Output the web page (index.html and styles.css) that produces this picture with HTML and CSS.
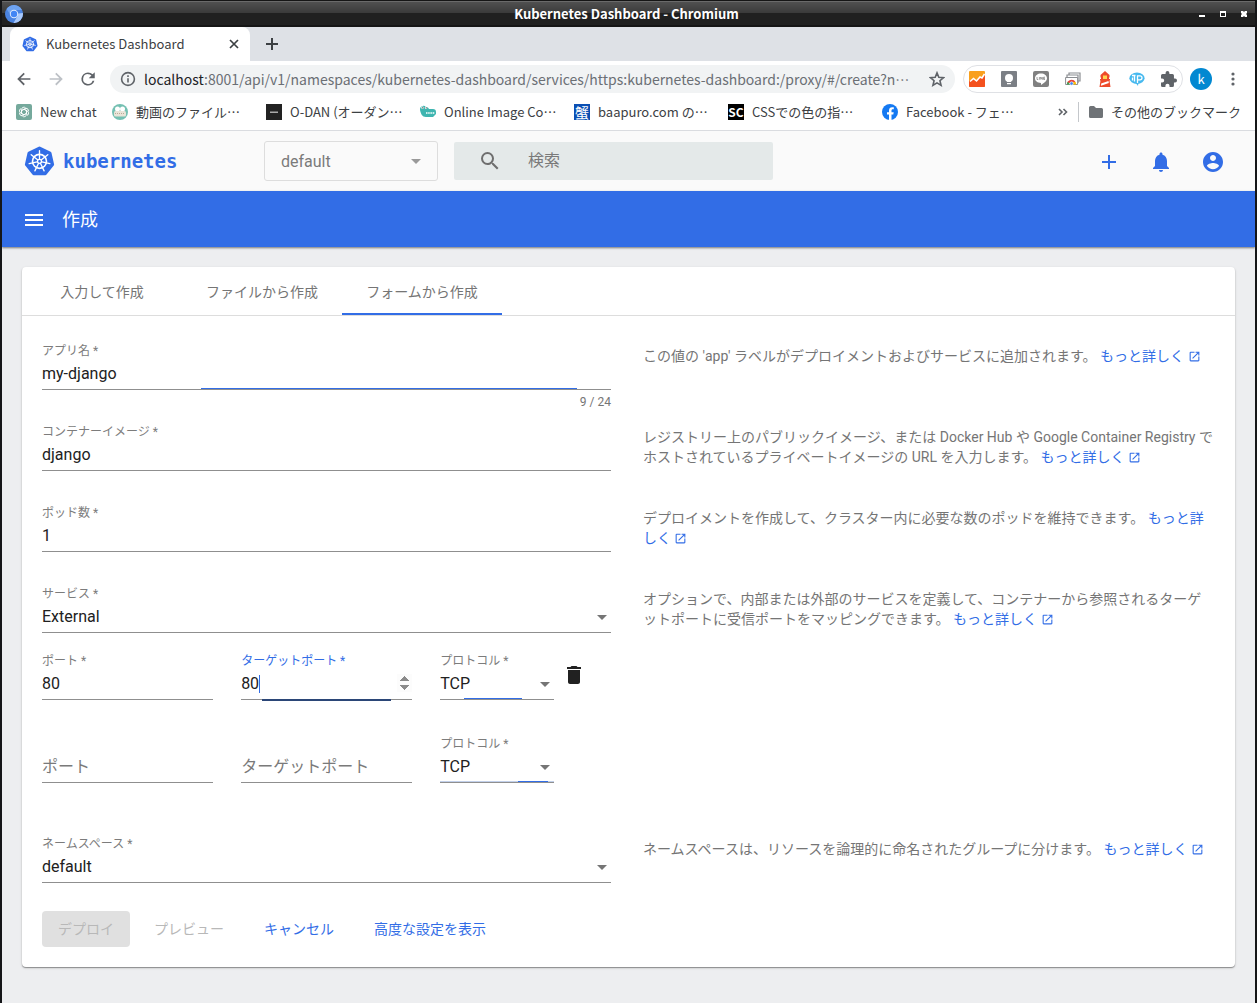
FILE: index.html
```html
<!DOCTYPE html>
<html lang="ja">
<head>
<meta charset="utf-8">
<meta name="viewport" content="width=device-width, initial-scale=1">
<title>Kubernetes Dashboard</title>
<link rel="stylesheet" href="styles.css">
</head>
<body>
<svg class="defs" aria-hidden="true">
  <symbol id="k8s" viewBox="2 2 28 27">
    <path d="M16 4 25.4 8.5 27.7 18.7 21.2 26.8H10.8L4.3 18.7 6.6 8.5Z" fill="#326de6" stroke="#326de6" stroke-width="3" stroke-linejoin="round"/>
    <g fill="none" stroke="#fff" stroke-width="1.2" stroke-linecap="round">
      <circle cx="16" cy="15.8" r="6.3" stroke-width="1.5"/>
      <path id="spoke" d="M16 13.6V6.2"/>
      <use href="#spoke" transform="rotate(51.43 16 15.8)"/>
      <use href="#spoke" transform="rotate(102.86 16 15.8)"/>
      <use href="#spoke" transform="rotate(154.29 16 15.8)"/>
      <use href="#spoke" transform="rotate(205.71 16 15.8)"/>
      <use href="#spoke" transform="rotate(257.14 16 15.8)"/>
      <use href="#spoke" transform="rotate(308.57 16 15.8)"/>
      <circle cx="16" cy="15.8" r="1.8"/>
    </g>
  </symbol>
  <symbol id="open" viewBox="0 0 24 24"><path d="M19 19H5V5h7V3H5a2 2 0 0 0-2 2v14a2 2 0 0 0 2 2h14c1.1 0 2-.9 2-2v-7h-2v7zM14 3v2h3.59l-9.83 9.83 1.41 1.41L19 6.41V10h2V3h-7z"/></symbol>
</svg>

<header class="titlebar">
  <svg class="icon18" viewBox="0 0 18 18"><circle cx="9" cy="9" r="9" fill="#4a83e0"/><path d="M9 9 17.9 8A9 9 0 0 1 8.500 18L12.500 11Z" fill="#a8c8fa"/><path d="M9 5h8A9 9 0 0 0 1.500 4L5 9Z" fill="#6ea3f0"/><circle cx="9" cy="9" r="4.200" fill="#dfeafd"/><circle cx="9" cy="9" r="3.200" fill="#4285f4"/></svg>
  <span class="titlebar-text">Kubernetes Dashboard - Chromium</span>
  <div class="window-buttons">
    <button aria-label="最小化"><svg viewBox="0 0 8 8"><path d="M1 5h6v2H1z"/></svg></button>
    <button aria-label="最大化"><svg viewBox="0 0 8 8"><path d="M1 1h6v6H1zM2 3v3h4V3z" fill-rule="evenodd"/></svg></button>
    <button aria-label="閉じる"><svg viewBox="0 0 8 8"><path d="M1 1h2l1 1 1-1h2v2L6 4l1 1v2H5L4 6 3 7H1V5l1-1-1-1z"/></svg></button>
  </div>
</header>

<div class="tabstrip">
  <div class="browser-tab">
    <svg class="icon16"><use href="#k8s"/></svg>
    <span class="browser-tab-title">Kubernetes Dashboard</span>
    <button aria-label="タブを閉じる"><svg viewBox="0 0 12 12" width="12" height="12"><path d="M2 2l8 8M10 2l-8 8" stroke="#3c4043" stroke-width="1.700"/></svg></button>
  </div>
  <button class="new-tab" aria-label="新しいタブ"><svg viewBox="0 0 14 14" width="14" height="14"><path d="M7 1v12M1 7h12" stroke="#3c4043" stroke-width="2"/></svg></button>
</div>

<div class="navbar">
  <button aria-label="戻る"><svg class="icon18" viewBox="0 0 24 24" fill="#5f6368"><path d="M20.500 10.900H7.400l5.700-5.700L11.500 3.500 3 12l8.500 8.500 1.600-1.700-5.700-5.700h13.100z"/></svg></button>
  <button aria-label="進む"><svg class="icon18" viewBox="0 0 24 24" fill="#bdc1c6"><path d="M3.500 10.900h13.100l-5.700-5.700 1.600-1.700L21 12l-8.500 8.500-1.600-1.700 5.700-5.700H3.500z"/></svg></button>
  <button aria-label="再読み込み"><svg class="icon18" viewBox="0 0 24 24" fill="#5f6368"><path d="M18.200 5.800A8.700 8.700 0 0 0 12 3.200a8.800 8.800 0 1 0 8.500 11h-2.400A6.500 6.500 0 1 1 12 5.500c1.800 0 3.400.7 4.600 1.900L13 11h8V3z"/></svg></button>
  <div class="omnibox">
    <svg class="icon16" viewBox="0 0 16 16" fill="none" stroke="#5f6368" stroke-width="1.600"><circle cx="8" cy="8" r="6.400"/><path d="M8 7.200v4.300M8 4.300v1.700"/></svg>
    <span class="url"><b>localhost</b>:8001/api/v1/namespaces/kubernetes-dashboard/services/https:kubernetes-dashboard:/proxy/#/create?n…</span>
    <svg class="icon16" viewBox="0 0 24 24" fill="none" stroke="#5f6368" stroke-width="2.400"><path d="M12 2.800l2.700 6.600 7.100.6-5.400 4.600 1.700 6.900-6.100-3.700-6.100 3.700 1.700-6.900-5.400-4.600 7.100-.6z"/></svg>
  </div>
  <div class="extensions">
    <svg class="icon16" viewBox="0 0 16 16"><rect width="16" height="16" rx="1" fill="#f9a01e"/><path d="M0 10 4 8l3 2 4-4 2 1 3-4v12a1 1 0 0 1-1 1H1a1 1 0 0 1-1-1z" fill="#f4511e"/><path d="M1 10.500 4.500 7.500l3 2.500L11 6l2 1 2.500-4" fill="none" stroke="#fff" stroke-width="1.600"/></svg>
    <svg class="icon16" viewBox="0 0 16 16"><rect width="16" height="16" rx="1" fill="#7b7f85"/><circle cx="8" cy="7" r="4" fill="#fff"/><path d="M6 9h4v2H6zM6 12h4v1.300H6z" fill="#fff"/></svg>
    <svg class="icon16" viewBox="0 0 16 16"><rect width="16" height="16" rx="2" fill="#808080"/><path d="M8 2.500c3.400 0 6 2.100 6 4.800 0 3-3.200 4.800-6 6.700v-2C4.600 12 2 10 2 7.300s2.600-4.800 6-4.800z" fill="#fff"/><path d="M4 6v2.500h1.200M6.400 6v2.700M7.700 8.600V6l1.600 2.500V6M12 6.200h-1.400v2.300H12M10.600 7.300H12" fill="none" stroke="#777" stroke-width=".7"/></svg>
    <svg class="icon16" viewBox="0 0 16 16"><path d="M4 3.500V2h11v8h-1.500M2 6V4h11v8" fill="none" stroke="#8a8d91" stroke-width="1.200"/><path d="M.6 6.500h12v7H.6z" fill="#fff" stroke="#8a8d91"/><path d="M2 13.500a4.600 4.600 0 0 1 8.500-2.500H6.600z" fill="#e94335"/><path d="M2 13.500a4.500 4.500 0 0 1 .8-2.700l2.500 2.700z" fill="#34a853"/><path d="M7 11h3.700l.5 2.500H7z" fill="#fbbc05"/><circle cx="6.600" cy="12.500" r="1.700" fill="#4285f4" stroke="#fff" stroke-width=".6"/></svg>
    <svg class="icon16" viewBox="0 0 16 16"><path d="M3.500 4 8 0l4.500 4v2.500H12v1.500h1v1.500h-.5L13.500 16h-11l1-6.500H3V8h1V6.500h-.5z" fill="#ee4b2b"/><path d="M6 4.500h4V8H6z" fill="#ffd54f"/><path d="M4.200 12.500 11.500 10l.3 2-7.800 2.800z" fill="#fff"/></svg>
    <svg class="icon16" viewBox="0 0 16 16"><ellipse cx="8" cy="7.200" rx="7.600" ry="5.700" fill="#46b9ef"/><path d="M6 11l3 4 .5-4z" fill="#46b9ef"/><path d="M3 4.500h3.500M5.500 4.500v6M3.500 6.500v3M8.500 12V4.800H11a2 2 0 0 1 0 4H8.500" stroke="#fff" stroke-width="1.300" fill="none"/></svg>
    <svg class="icon16" viewBox="2 1 21 21" fill="#5f6368"><path d="M20.500 11H19V7a2 2 0 0 0-2-2h-4V3.500a2.500 2.500 0 0 0-5 0V5H4a2 2 0 0 0-2 2v3.800h1.500a2.700 2.700 0 0 1 0 5.400H2V20a2 2 0 0 0 2 2h3.800v-1.500a2.700 2.700 0 0 1 5.400 0V22H17a2 2 0 0 0 2-2v-4h1.500a2.500 2.500 0 0 0 0-5z"/></svg>
  </div>
  <span class="avatar">k</span>
  <button class="more" aria-label="メニュー"><svg width="4" height="16" viewBox="0 0 4 16" fill="#5f6368"><circle cx="2" cy="3" r="1.600"/><circle cx="2" cy="8" r="1.600"/><circle cx="2" cy="13" r="1.600"/></svg></button>
</div>

<nav class="bookmarks">
  <a href="#" class="bookmark short"><svg class="icon16" viewBox="0 0 16 16"><rect width="16" height="16" rx="2" fill="#75a99c"/><g fill="none" stroke="#fff" stroke-width=".9"><path id="petal" d="M8 5.200 10.500 6.700V10.500a2.500 2.500 0 0 1-4 1.800"/><use href="#petal" transform="rotate(60 8 8)"/><use href="#petal" transform="rotate(120 8 8)"/><use href="#petal" transform="rotate(180 8 8)"/><use href="#petal" transform="rotate(240 8 8)"/><use href="#petal" transform="rotate(300 8 8)"/></g></svg>New chat</a>
  <a href="#" class="bookmark"><svg class="icon16" viewBox="0 0 16 16"><circle cx="8" cy="8" r="8" fill="#74c0b2"/><circle cx="5.500" cy="5" r="2.500" fill="#fff"/><circle cx="10.500" cy="5" r="2.500" fill="#fff"/><rect x="2" y="7" width="12" height="5.500" rx="1.500" fill="#e9e4d8"/><path d="M3 9.500h10" stroke="#b9ab97" stroke-dasharray="1 1"/></svg>動画のファイル…</a>
  <a href="#" class="bookmark"><svg class="icon16" viewBox="0 0 16 16"><rect width="16" height="16" fill="#222"/><path d="M4 7.500h8v1.500H4z" fill="#aaa"/></svg>O-DAN (オーダン…</a>
  <a href="#" class="bookmark"><svg class="icon16" viewBox="0 0 16 16"><path d="M0 6a3.500 3.500 0 0 1 6-3 3 3 0 0 1 3 2h4a3 3 0 0 1 3 3v2l-3 3H6C2 13 1 10 0 6z" fill="#3fb5b0"/><path d="M6 9h9" stroke="#fff" stroke-width="1.400" stroke-dasharray="1.500 .7"/><circle cx="2.500" cy="3.700" r="1.200" fill="#fff"/><circle cx="6" cy="3.700" r="1.200" fill="#fff"/><circle cx="2.700" cy="3.800" r=".6" fill="#222"/><circle cx="6.200" cy="3.800" r=".6" fill="#222"/></svg>Online Image Co…</a>
  <a href="#" class="bookmark"><span class="favicon blue">蟹</span>baapuro.com の…</a>
  <a href="#" class="bookmark"><span class="favicon black">SC</span>CSSでの色の指…</a>
  <a href="#" class="bookmark"><svg class="icon16" viewBox="0 0 16 16"><circle cx="8" cy="8" r="8" fill="#1479f2"/><path d="M7 16v-5.500H5V8.200h2V6.600C7 4.400 8.200 3.200 10.100 3.200l1.700.1v2h-1c-1 0-1.300.6-1.300 1.300v1.600h2.200l-.4 2.300H9.500V16z" fill="#fff"/></svg>Facebook - フェ…</a>
  <button class="overflow" aria-label="他のブックマーク"><svg width="10" height="8" viewBox="0 0 10 8" fill="none" stroke="#5f6368" stroke-width="1.600"><path d="M1 1l3 3-3 3M5.500 1l3 3-3 3"/></svg></button>
  <a href="#" class="bookmark folder"><svg width="14" height="16" viewBox="0 0 14 16" fill="#6f7377"><path d="M0 3.500A1.500 1.500 0 0 1 1.500 2H5l2 2h5.500A1.500 1.500 0 0 1 14 5.500v7a1.500 1.500 0 0 1-1.500 1.500h-11A1.500 1.500 0 0 1 0 12.500z"/></svg>その他のブックマーク</a>
</nav>

<header class="app-header">
  <a href="#" class="logo"><svg viewBox="2 2 28 27"><use href="#k8s" x="2" y="2" width="28" height="27"/></svg>kubernetes</a>
  <div class="namespace select-box">
    <select aria-label="ネームスペース選択"><option>default</option></select>
  </div>
  <label class="search">
    <svg class="icon24" viewBox="0 0 24 24" fill="#6e6e6e"><path d="M15.500 14h-.79l-.28-.27A6.471 6.471 0 0 0 16 9.500 6.500 6.500 0 1 0 9.500 16c1.610 0 3.090-.59 4.230-1.570l.27.28v.79l5 4.990L20.490 19l-4.990-5zm-6 0C7.010 14 5 11.990 5 9.500S7.010 5 9.500 5 14 7.010 14 9.500 11.990 14 9.500 14z"/></svg>
    <input type="text" placeholder="検索" aria-label="検索">
  </label>
  <div class="app-actions">
    <button aria-label="作成"><svg class="icon24" viewBox="0 0 24 24"><path d="M19 13h-6v6h-2v-6H5v-2h6V5h2v6h6v2z"/></svg></button>
    <button aria-label="通知"><svg class="icon24" viewBox="0 0 24 24"><path d="M12 22c1.100 0 2-.9 2-2h-4c0 1.100.89 2 2 2zm6-6v-5c0-3.070-1.640-5.640-4.500-6.320V4c0-.83-.67-1.500-1.500-1.500s-1.500.67-1.500 1.500v.68C7.630 5.360 6 7.920 6 11v5l-2 2v1h16v-1l-2-2z"/></svg></button>
    <button aria-label="ユーザー"><svg class="icon24" viewBox="0 0 24 24"><path d="M12 2C6.480 2 2 6.480 2 12s4.480 10 10 10 10-4.480 10-10S17.520 2 12 2zm0 3c1.660 0 3 1.340 3 3s-1.340 3-3 3-3-1.340-3-3 1.340-3 3-3zm0 14.200c-2.500 0-4.710-1.280-6-3.220.03-1.990 4-3.080 6-3.080 1.990 0 5.970 1.090 6 3.080-1.290 1.940-3.500 3.220-6 3.220z"/></svg></button>
  </div>
</header>

<div class="action-bar">
  <button aria-label="ナビゲーション"><svg class="icon24" viewBox="0 0 24 24" fill="#fff"><path d="M3 18h18v-2H3v2zm0-5h18v-2H3v2zm0-7v2h18V6H3z"/></svg></button>
  <h1>作成</h1>
</div>

<main>
  <section class="card">
    <div class="tabs" role="tablist">
      <button role="tab">入力して作成</button>
      <button role="tab">ファイルから作成</button>
      <button role="tab" aria-selected="true">フォームから作成</button>
    </div>
    <form>
      <div class="form-row">
        <div class="field">
          <label for="app">アプリ名 *</label>
          <input id="app" type="text" value="my-django">
          <i class="ripple ripple-name"></i>
          <span class="counter">9 / 24</span>
        </div>
        <p>この値の 'app' ラベルがデプロイメントおよびサービスに追加されます。 <a href="#">もっと詳しく <svg><use href="#open"/></svg></a></p>
      </div>
      <div class="form-row">
        <div class="field">
          <label for="image">コンテナーイメージ *</label>
          <input id="image" type="text" value="django">
        </div>
        <p>レジストリー上のパブリックイメージ、または Docker Hub や Google Container Registry でホストされているプライベートイメージの URL を入力します。 <a href="#">もっと詳しく <svg><use href="#open"/></svg></a></p>
      </div>
      <div class="form-row">
        <div class="field">
          <label for="pods">ポッド数 *</label>
          <input id="pods" type="number" value="1">
        </div>
        <p>デプロイメントを作成して、クラスター内に必要な数のポッドを維持できます。 <a href="#">もっと詳しく <svg><use href="#open"/></svg></a></p>
      </div>
      <div class="form-row service">
        <div>
          <div class="field">
            <label for="service">サービス *</label>
            <div class="select-box"><select id="service"><option>External</option></select></div>
          </div>
          <div class="ports">
            <div class="field">
              <label for="port1">ポート *</label>
              <input id="port1" type="number" value="80">
            </div>
            <div class="field active">
              <label for="target1">ターゲットポート *</label>
              <input id="target1" type="number" value="80">
              <i class="caret"></i>
              <i class="ripple ripple-target"></i>
            </div>
            <div class="field">
              <label for="proto1">プロトコル *</label>
              <div class="select-box"><select id="proto1"><option>TCP</option></select></div>
              <i class="ripple ripple-proto"></i>
            </div>
            <button type="button" class="delete" aria-label="削除"><svg class="icon24" viewBox="0 0 24 24"><path d="M6 19c0 1.100.9 2 2 2h8c1.100 0 2-.9 2-2V7H6v12zM19 4h-3.500l-1-1h-5l-1 1H5v2h14V4z"/></svg></button>
          </div>
          <div class="ports">
            <div class="field"><span class="label-space"></span><input type="number" placeholder="ポート" aria-label="ポート"></div>
            <div class="field"><span class="label-space"></span><input type="number" placeholder="ターゲットポート" aria-label="ターゲットポート"></div>
            <div class="field">
              <label for="proto2">プロトコル *</label>
              <div class="select-box"><select id="proto2"><option>TCP</option></select></div>
              <i class="ripple ripple-faint"></i>
              <i class="ripple ripple-last"></i>
            </div>
          </div>
        </div>
        <p>オプションで、内部または外部のサービスを定義して、コンテナーから参照されるターゲットポートに受信ポートをマッピングできます。 <a href="#">もっと詳しく <svg><use href="#open"/></svg></a></p>
      </div>
      <div class="form-row last">
        <div class="field">
          <label for="ns">ネームスペース *</label>
          <div class="select-box"><select id="ns"><option>default</option></select></div>
        </div>
        <p>ネームスペースは、リソースを論理的に命名されたグループに分けます。 <a href="#">もっと詳しく <svg><use href="#open"/></svg></a></p>
      </div>
      <div class="buttons">
        <button type="submit" class="raised" disabled>デプロイ</button>
        <button type="button" disabled>プレビュー</button>
        <button type="button">キャンセル</button>
        <button type="button">高度な設定を表示</button>
      </div>
    </form>
  </section>
</main>
</body>
</html>
```

FILE: styles.css
```css
* { box-sizing: border-box; }

body {
  margin: 0;
  min-height: 100vh;
  display: flex;
  flex-direction: column;
  border: solid #151618;
  border-width: 0 2px;
  background: #edeef0;
  color: #212121;
  font: 14px/20px Roboto, "Noto Sans CJK JP", sans-serif;
}

button, input, select { font: inherit; color: inherit; }
button { border: 0; padding: 0; background: none; display: flex; align-items: center; justify-content: center; }
a { color: inherit; text-decoration: none; }
.defs { display: none; }
.icon16 { width: 16px; height: 16px; flex: none; }
.icon18 { width: 18px; height: 18px; flex: none; }
.icon24 { width: 24px; height: 24px; flex: none; }

/* Window title bar */
.titlebar, .tabstrip, .navbar, .bookmarks { font-family: "Noto Sans CJK JP", sans-serif; }
.titlebar {
  height: 27px;
  padding: 0 7px 0 3px;
  display: grid;
  grid-template-columns: 1fr auto 1fr;
  align-items: center;
  background: linear-gradient(#151515 0 1px, #6a6a6a 1px 2px, #505050 2px, #3a3a3a 13px, #202020 13px, #202020 25px, #151515 25px);
  color: #fff;
}
.titlebar-text { font-size: 13px; font-weight: 700; }
.window-buttons { display: flex; justify-content: flex-end; gap: 13px; }
.window-buttons svg { width: 8px; height: 8px; fill: #fff; }

/* Tab strip */
.tabstrip { height: 34px; padding-left: 8px; display: flex; background: #dee1e6; color: #3c4043; }
.browser-tab {
  width: 240px;
  padding: 0 10px 0 12px;
  display: flex;
  align-items: center;
  gap: 8px;
  background: #fff;
  border-radius: 8px 8px 0 0;
}
.browser-tab-title { flex: 1; font-size: 13px; }
.new-tab { width: 44px; }

/* Address bar */
.navbar { height: 36px; padding: 0 8px; display: flex; align-items: center; background: #fff; }
.navbar > button { width: 28px; height: 28px; margin-right: 4px; }
.omnibox {
  flex: 1;
  min-width: 0;
  height: 28px;
  margin-left: 4px;
  padding: 0 10px;
  display: flex;
  align-items: center;
  gap: 8px;
  border-radius: 14px;
  background: #f1f3f4;
  color: #6b6f74;
}
.url { flex: 1; min-width: 0; overflow: hidden; white-space: nowrap; font-size: 14px; }
.url b { font-weight: 400; color: #202124; }
.extensions {
  height: 28px;
  margin-left: 8px;
  padding: 0 5px;
  display: flex;
  align-items: center;
  gap: 16px;
  border: 1px solid #dfe1e5;
  border-radius: 14px;
}
.avatar {
  width: 22px;
  height: 22px;
  margin: 0 7px;
  border-radius: 50%;
  background: #0288d1;
  color: #fff;
  font-size: 13px;
  line-height: 21px;
  text-align: center;
}
.navbar > .more { margin-right: 0; }

/* Bookmarks */
.bookmarks {
  height: 34px;
  padding: 0 14px 4px;
  display: flex;
  align-items: center;
  background: #fff;
  border-bottom: 1px solid #dadce0;
  color: #3c4043;
  font-size: 13px;
}
.bookmark { width: 154px; flex: none; display: flex; align-items: center; gap: 8px; white-space: nowrap; }
.bookmark.short { width: 96px; }
.bookmark.folder { width: auto; padding-left: 10px; border-left: 1px solid #c4c7cb; }
.overflow { margin-left: auto; margin-right: 10px; }
.favicon { flex: none; width: 16px; height: 16px; color: #fff; font-size: 14px; line-height: 16px; text-align: center; }
.favicon.blue { background: #0b4fb3; }
.favicon.black { background: #000; font-size: 12px; font-weight: 700; }

/* Dashboard header */
.app-header { height: 60px; padding: 0 22px; display: flex; align-items: center; background: #fafafa; }
.logo {
  width: 240px;
  display: flex;
  align-items: center;
  gap: 8px;
  color: #326de6;
  font: bold 19px/24px "DejaVu Sans Mono", monospace;
}
.logo svg { width: 31px; height: 30px; }

.select-box { display: grid; align-items: center; }
.select-box select, .select-box::after { grid-area: 1 / 1; }
.select-box::after {
  content: "";
  justify-self: end;
  margin-right: 4px;
  border: 5px solid transparent;
  border-top-color: #757575;
  border-bottom-width: 0;
  pointer-events: none;
}
.namespace { width: 174px; color: #7a7a7a; font-size: 16px; }
.namespace select {
  appearance: none;
  height: 40px;
  padding: 2px 16px 0;
  border: 1px solid #ddd;
  border-radius: 3px;
  background: none;
}
.namespace::after { margin-right: 17px; border-top-color: #999; }
.search {
  width: 319px;
  height: 38px;
  margin-left: 16px;
  padding: 0 24px;
  display: flex;
  align-items: center;
  gap: 26px;
  border-radius: 2px;
  background: #e4e9e9;
}
.search input { flex: 1; min-width: 0; padding: 0; border: 0; background: none; font-size: 16px; }
::placeholder { color: #7a7a7a; opacity: 1; }
.app-actions { margin-left: auto; padding-top: 2px; display: flex; gap: 12px; }
.app-actions button { width: 40px; height: 40px; fill: #326de6; }

.action-bar {
  height: 56px;
  padding: 2px 20px 0;
  display: flex;
  align-items: center;
  gap: 16px;
  background: #326de6;
  box-shadow: 0 1px 2px rgba(0, 0, 0, .5);
  color: #fff;
}
.action-bar h1 { margin: 0; font-size: 18px; font-weight: 400; }

/* Form card */
main { padding: 20px; }
.card {
  border-radius: 4px;
  background: #fff;
  box-shadow: 0 1px 1px rgba(0, 0, 0, .35), 0 1px 3px rgba(0, 0, 0, .14);
}
.tabs { height: 49px; display: flex; border-bottom: 1px solid #ddd; color: #757575; }
.tabs button { width: 160px; border: solid transparent; border-width: 4px 0 2px; }
.tabs button[aria-selected] { border-bottom-color: #326de6; }

form { padding: 26px 20px 20px; }
.form-row { min-height: 81px; display: grid; grid-template-columns: 569fr 572fr; column-gap: 32px; align-items: start; }
.form-row.service { min-height: 250px; }
.form-row.last { min-height: 76px; }
.form-row > p { margin: 4px 0 0; color: #757575; }
.form-row > p a { color: #326de6; }
.form-row > p svg { width: 13px; height: 13px; vertical-align: -2px; fill: #326de6; }

.field { position: relative; min-width: 0; }
.field label { display: block; height: 16px; color: #7c7c7c; font-size: 12px; line-height: 18px; }
.label-space { display: block; height: 16px; }
.field input, .field select {
  appearance: none;
  display: block;
  width: 100%;
  height: 32px;
  padding: 0;
  border: 0;
  border-bottom: 1px solid #8f8f8f;
  border-radius: 0;
  background: none;
  font-size: 16px;
}
.field input::-webkit-inner-spin-button { display: none; }
.field.active input::-webkit-inner-spin-button { display: block; opacity: 1; }
.field.active label { color: #326de6; }
.counter { display: block; padding-top: 4px; color: #757575; font-size: 12px; line-height: 16px; text-align: right; }

.ports { display: grid; grid-template-columns: 30% 30% 20% 40px; column-gap: 5%; margin-top: 19px; }
.ports + .ports { margin-top: 35px; }
.delete { width: 40px; height: 40px; margin: 3px 0 0 -28px; fill: #212121; }

/* Focus underlines caught mid-animation, drawn over the fields */
.ripple { position: absolute; top: 46px; height: 1px; background: #326de6; }
.ripple-name { left: 28%; width: 66%; }
.ripple-target { top: 47px; left: 12%; width: 76%; height: 2px; background: #2b4677; }
.ripple-proto { left: 21%; width: 51%; }
.ripple-faint { left: 0; width: 100%; background: #c2d0ea; }
.ripple-last { left: 68%; width: 27%; }
.caret { position: absolute; top: 23px; left: 18px; width: 1px; height: 18px; background: #326de6; }

.buttons { display: flex; gap: 8px; color: #326de6; }
.buttons button { height: 36px; padding: 0 16px; }
.buttons button:disabled { color: #b8b8b8; }
.buttons .raised { border-radius: 4px; background: #e0e0e0; }
```
